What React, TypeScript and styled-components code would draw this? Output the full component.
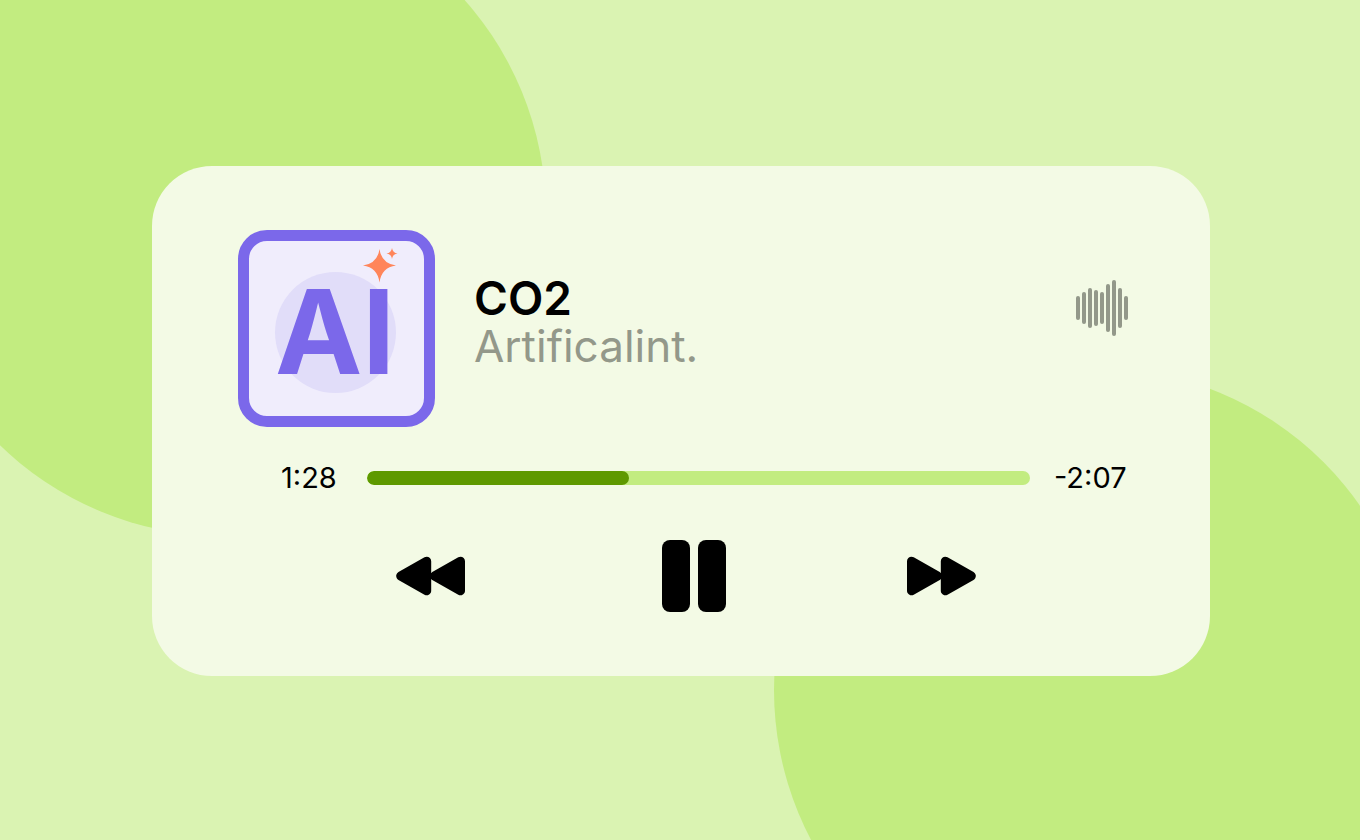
import React from "react";
import styled, { createGlobalStyle } from "styled-components";

const GlobalStyle = createGlobalStyle`
  *, *::before, *::after { box-sizing: border-box; }
  body {
    margin: 0;
    background: #daf3b2;
    color: #000;
    font-family: Inter, "Liberation Sans", sans-serif;
  }
`;

const Page = styled.main`
  position: relative;
  display: flex;
  align-items: center;
  min-height: 100vh;
  padding: 66px 150px 64px 152px;
  overflow: hidden;
`;

const Blob = styled.div<{ $corner: "start" | "end" }>`
  position: absolute;
  width: 644px;
  height: 644px;
  border-radius: 50%;
  background: #c2ec80;
  ${({ $corner }) =>
    $corner === "start" ? "top: -108px; left: -98px;" : "right: -58px; bottom: -172px;"}
`;

const Card = styled.section`
  position: relative;
  flex: 1;
  min-width: 0;
  padding: 64px 0;
  border-radius: 60px;
  background: #f3fae5;
`;

const Header = styled.header`
  display: flex;
  align-items: flex-start;
  gap: 39px;
  padding: 0 82px 0 86px;
`;

const Artwork = styled.svg`
  display: block;
  flex: none;
`;

const ArtworkLetters = styled.text`
  font-family: Inter, "Liberation Sans", sans-serif;
  font-size: 117px;
  font-weight: 700;
  fill: #7b68ea;
`;

const TrackInfo = styled.div`
  flex: 1;
  padding-top: 44px;
  line-height: 48px;
`;

const Title = styled.h1`
  margin: 0;
  font-size: 46px;
  font-weight: 600;
`;

const Artist = styled.p`
  margin: 0;
  font-size: 44px;
  color: #93988a;
`;

const Waveform = styled.svg`
  display: block;
  flex: none;
  margin-top: 50px;
`;

const Timeline = styled.div`
  display: flex;
  align-items: center;
  gap: 24px;
  margin-top: 33px;
  padding: 0 82px 0 129px;
  font-size: 29px;
  line-height: 36px;
`;

const Time = styled.time<{ $width: number }>`
  flex: none;
  width: ${({ $width }) => $width}px;
  white-space: nowrap;
`;

const Progress = styled.progress`
  appearance: none;
  display: block;
  flex: 1;
  min-width: 0;
  height: 14px;
  border: 0;
  border-radius: 7px;
  overflow: hidden;
  background: #c2ec80;

  &::-webkit-progress-bar {
    background: #c2ec80;
  }
  &::-webkit-progress-value {
    border-radius: 7px;
    background: #5e9900;
  }
`;

const Controls = styled.div`
  display: grid;
  grid-template-columns: 266fr 64px 250fr;
  align-items: center;
  margin-top: 44px;
  padding: 0 234px 0 244px;
`;

const ControlButton = styled.button<{ $align: "start" | "center" | "end" }>`
  justify-self: ${({ $align }) => $align};
  padding: 0;
  border: 0;
  background: none;
  color: inherit;
  cursor: pointer;

  svg {
    display: block;
  }
`;

const barHeights = [24, 32, 40, 36, 32, 48, 56, 40, 24];

const SkipIcon = ({ back = false }: { back?: boolean }) => (
  <svg width="69" height="40" viewBox="0 0 69 40" aria-hidden="true">
    <g
      transform={back ? "translate(69 0) scale(-1 1)" : undefined}
      fill="currentColor"
      stroke="currentColor"
      strokeWidth="9"
      strokeLinejoin="round"
    >
      <path d="M4.5 5.2 30.5 20 4.5 34.8Z" />
      <path d="M38.3 5.2 64.3 20 38.3 34.8Z" />
    </g>
  </svg>
);

export default function App() {
  return (
    <>
      <GlobalStyle />
      <Page>
        <Blob $corner="start" />
        <Blob $corner="end" />
        <Card aria-label="Music player">
          <Header>
            <Artwork width="197" height="197" viewBox="0 0 197 197">
              <rect x="5.5" y="5.5" width="186" height="186" rx="23.5" fill="#f0edfc" stroke="#7b68ea" strokeWidth="11" />
              <circle cx="97.5" cy="102.5" r="60.5" fill="#e1ddf9" />
              <ArtworkLetters x="37" y="144">AI</ArtworkLetters>
              <g fill="#ff855a">
                <path d="M141.500 19Q143.500 33.500 158 35.500Q143.500 37.500 141.500 52.500Q139.500 37.500 125 35.500Q139.500 33.500 141.500 19Z" />
                <path d="M154 18Q154.700 22.800 159.500 23.500Q154.700 24.200 154 29Q153.300 24.200 148.500 23.500Q153.300 22.800 154 18Z" />
              </g>
            </Artwork>
            <TrackInfo>
              <Title>CO2</Title>
              <Artist>Artificalint.</Artist>
            </TrackInfo>
            <Waveform width="52" height="56" viewBox="0 0 52 56" fill="#93988a" aria-hidden="true">
              {barHeights.map((height, index) => (
                <rect key={index} x={index * 6} y={28 - height / 2} width="4" height={height} rx="2" />
              ))}
            </Waveform>
          </Header>
          <Timeline>
            <Time $width={62}>1:28</Time>
            <Progress value={39.5} max={100} aria-label="Playback position" />
            <Time $width={74}>-2:07</Time>
          </Timeline>
          <Controls>
            <ControlButton $align="start" type="button" aria-label="Previous track">
              <SkipIcon back />
            </ControlButton>
            <ControlButton $align="center" type="button" aria-label="Pause">
              <svg width="64" height="72" viewBox="0 0 64 72" fill="currentColor" aria-hidden="true">
                <rect width="28" height="72" rx="8" />
                <rect x="36" width="28" height="72" rx="8" />
              </svg>
            </ControlButton>
            <ControlButton $align="end" type="button" aria-label="Next track">
              <SkipIcon />
            </ControlButton>
          </Controls>
        </Card>
      </Page>
    </>
  );
}
